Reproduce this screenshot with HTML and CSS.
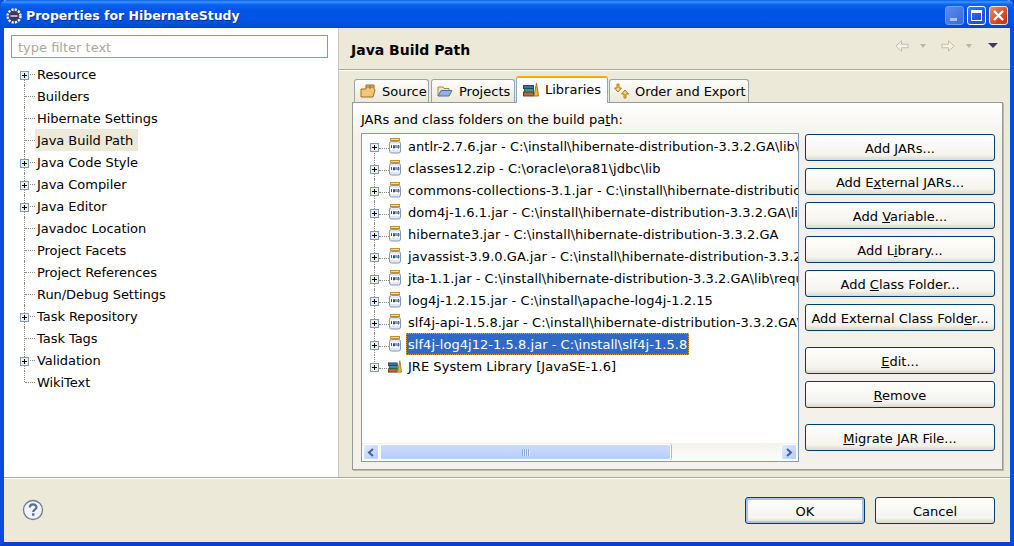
FILE: index.html
```html
<!DOCTYPE html>
<html lang="en">
<head>
  <meta charset="UTF-8">
  <title>Properties for HibernateStudy</title>
  <link rel="stylesheet" href="styles.css">
</head>
<body>

  <svg class="sprites" width="0" height="0">
    <symbol id="jar" viewBox="0 0 14 16">
      <rect x="2.5" y="0.5" width="9" height="2" fill="#f6dc88" stroke="#b8923a"/>
      <rect x="1.5" y="3.5" width="11" height="11.5" rx="2" fill="#dfe8f3" stroke="#8097b5"/>
      <rect x="2" y="6" width="10" height="6" fill="#fff"/>
      <path d="M3.500 7v3M5.500 7.500h1v2.500h-1zM8 7v3M9.900 7.500h1v2.500h-1z" fill="none" stroke="#2f4f86" stroke-width="1"/>
    </symbol>
    <symbol id="books" viewBox="0 0 16 16">
      <rect x="0.5" y="11" width="10" height="4" fill="#c0623a" stroke="#7a3a20"/>
      <rect x="1.5" y="7.500" width="9" height="3.500" fill="#3f9a78" stroke="#22604a"/>
      <rect x="0.5" y="4.500" width="10" height="3" fill="#3f6fb0" stroke="#24456f"/>
      <path d="M11 15l2.500-13 2 13z" fill="#f0b83c" stroke="#a87a18"/>
    </symbol>
    <symbol id="plus" viewBox="0 0 9 9">
      <rect x="0.5" y="0.5" width="8" height="8" fill="#f1eee3" stroke="#7f9db9"/>
      <path d="M2 4.500h5M4.500 2v5" stroke="#000"/>
    </symbol>
  </svg>

  <div class="window">

    <div class="titlebar">
      <svg class="app-icon" width="16" height="16" viewBox="0 0 16 16">
        <circle cx="8" cy="8" r="6.500" fill="#4a3f78" stroke="#f4f1ea" stroke-width="2.400" stroke-dasharray="2.200 1.200"/>
        <circle cx="8" cy="8" r="4" fill="#3a3560"/>
        <path d="M4.500 8h7" stroke="#e8e4f2" stroke-width="1.400"/>
      </svg>
      <span class="title-text">Properties for HibernateStudy</span>
      <div class="win-buttons">
        <div class="win-btn"><span class="min-glyph"></span></div>
        <div class="win-btn"><span class="max-glyph"></span></div>
        <div class="win-btn close">
          <svg width="13" height="13" viewBox="0 0 13 13"><path d="M2 2l9 9M11 2l-9 9" stroke="#fff" stroke-width="2.400"/></svg>
        </div>
      </div>
    </div>

    <div class="main">

      <div class="left-pane">
        <div class="filter">type filter text</div>
        <ul class="nav-tree">
          <li class="has-kids"><svg class="plus"><use href="#plus"/></svg><span>Resource</span></li>
          <li><span>Builders</span></li>
          <li><span>Hibernate Settings</span></li>
          <li class="current"><span>Java Build Path</span></li>
          <li class="has-kids"><svg class="plus"><use href="#plus"/></svg><span>Java Code Style</span></li>
          <li class="has-kids"><svg class="plus"><use href="#plus"/></svg><span>Java Compiler</span></li>
          <li class="has-kids"><svg class="plus"><use href="#plus"/></svg><span>Java Editor</span></li>
          <li><span>Javadoc Location</span></li>
          <li><span>Project Facets</span></li>
          <li><span>Project References</span></li>
          <li><span>Run/Debug Settings</span></li>
          <li class="has-kids"><svg class="plus"><use href="#plus"/></svg><span>Task Repository</span></li>
          <li><span>Task Tags</span></li>
          <li class="has-kids"><svg class="plus"><use href="#plus"/></svg><span>Validation</span></li>
          <li class="last"><span>WikiText</span></li>
        </ul>
      </div>

      <div class="right-pane">
        <div class="page-header">
          <h1>Java Build Path</h1>
          <div class="history">
            <svg width="14" height="14" viewBox="0 0 16 16"><path d="M1 8l6.500-6v4h7.500v4H7.500v4z" fill="#f3f1e8" stroke="#b9b7ad"/></svg>
            <span class="tiny-arrow"></span>
            <svg width="14" height="14" viewBox="0 0 16 16"><path d="M15 8L8.500 2v4H1v4h7.500v4z" fill="#f3f1e8" stroke="#b9b7ad"/></svg>
            <span class="tiny-arrow"></span>
            <span class="menu-arrow"></span>
          </div>
        </div>

        <div class="tabs-area">
          <div class="tabs">
            <div class="tab tab-source">
              <svg width="16" height="16" viewBox="0 0 16 16"><path d="M1 14V6h5V2h8v4l1 1-2 7z" fill="#f3c67c" stroke="#a06a20"/><path d="M6 4h8M10 2v4" fill="none" stroke="#a06a20"/></svg>
              Source
            </div>
            <div class="tab tab-projects">
              <svg width="16" height="16" viewBox="0 0 16 16"><path d="M1 13V4h5l1 1.500h5V8" fill="#fbe7a8" stroke="#a08a40"/><path d="M1 13l3-5.500h11L12 13z" fill="#8fb4e6" stroke="#4a6ea8"/></svg>
              Projects
            </div>
            <div class="tab active">
              <svg width="16" height="16"><use href="#books"/></svg>
              Libraries
            </div>
            <div class="tab tab-order">
              <svg width="17" height="16" viewBox="0 0 17 16"><path d="M5 1v4h2.500L4 9 .5 5H3V1z" fill="#f6d47c" stroke="#a87a18"/><path d="M12 15v-4h2.500L11 7 7.500 11H10v4z" fill="#f6d47c" stroke="#a87a18"/></svg>
              Order and Export
            </div>
          </div>

          <div class="tab-panel">
            <div class="panel-label">JARs and class folders on the build pa<u>t</u>h:</div>
            <div class="panel-body">

              <div class="lib-list">
                <ul class="lib-rows">
                  <li><svg class="plus"><use href="#plus"/></svg><svg class="row-icon"><use href="#jar"/></svg><span>antlr-2.7.6.jar - C:\install\hibernate-distribution-3.3.2.GA\lib\bytecode</span></li>
                  <li><svg class="plus"><use href="#plus"/></svg><svg class="row-icon"><use href="#jar"/></svg><span>classes12.zip - C:\oracle\ora81\jdbc\lib</span></li>
                  <li><svg class="plus"><use href="#plus"/></svg><svg class="row-icon"><use href="#jar"/></svg><span>commons-collections-3.1.jar - C:\install\hibernate-distribution-3.3.2.GA</span></li>
                  <li><svg class="plus"><use href="#plus"/></svg><svg class="row-icon"><use href="#jar"/></svg><span>dom4j-1.6.1.jar - C:\install\hibernate-distribution-3.3.2.GA\lib\required</span></li>
                  <li><svg class="plus"><use href="#plus"/></svg><svg class="row-icon"><use href="#jar"/></svg><span>hibernate3.jar - C:\install\hibernate-distribution-3.3.2.GA</span></li>
                  <li><svg class="plus"><use href="#plus"/></svg><svg class="row-icon"><use href="#jar"/></svg><span>javassist-3.9.0.GA.jar - C:\install\hibernate-distribution-3.3.2.GA\lib</span></li>
                  <li><svg class="plus"><use href="#plus"/></svg><svg class="row-icon"><use href="#jar"/></svg><span>jta-1.1.jar - C:\install\hibernate-distribution-3.3.2.GA\lib\required</span></li>
                  <li><svg class="plus"><use href="#plus"/></svg><svg class="row-icon"><use href="#jar"/></svg><span>log4j-1.2.15.jar - C:\install\apache-log4j-1.2.15</span></li>
                  <li><svg class="plus"><use href="#plus"/></svg><svg class="row-icon"><use href="#jar"/></svg><span>slf4j-api-1.5.8.jar - C:\install\hibernate-distribution-3.3.2.GA\lib\required</span></li>
                  <li class="selected"><svg class="plus"><use href="#plus"/></svg><svg class="row-icon"><use href="#jar"/></svg><span>slf4j-log4j12-1.5.8.jar - C:\install\slf4j-1.5.8</span></li>
                  <li class="last"><svg class="plus"><use href="#plus"/></svg><svg class="row-icon"><use href="#books"/></svg><span>JRE System Library [JavaSE-1.6]</span></li>
                </ul>
                <div class="hscroll">
                  <div class="scroll-btn"><svg width="8" height="9" viewBox="0 0 8 9"><path d="M6 1L2 4.500 6 8" fill="none" stroke="#3f5f9f" stroke-width="2"/></svg></div>
                  <div class="scroll-track">
                    <div class="scroll-thumb"><span class="grip"></span></div>
                  </div>
                  <div class="scroll-btn"><svg width="8" height="9" viewBox="0 0 8 9"><path d="M2 1l4 3.500L2 8" fill="none" stroke="#3f5f9f" stroke-width="2"/></svg></div>
                </div>
              </div>

              <div class="side-buttons">
                <div class="btn-group">
                  <button class="btn">Add <u>J</u>ARs...</button>
                  <button class="btn">Add E<u>x</u>ternal JARs...</button>
                  <button class="btn">Add <u>V</u>ariable...</button>
                  <button class="btn">Add L<u>i</u>brary...</button>
                  <button class="btn">Add <u>C</u>lass Folder...</button>
                  <button class="btn">Add External Class Fold<u>e</u>r...</button>
                </div>
                <div class="btn-group">
                  <button class="btn"><u>E</u>dit...</button>
                  <button class="btn"><u>R</u>emove</button>
                </div>
                <div class="btn-group">
                  <button class="btn"><u>M</u>igrate JAR File...</button>
                </div>
              </div>

            </div>
          </div>
        </div>
      </div>

    </div>

    <div class="footer">
      <svg class="help" width="22" height="22" viewBox="0 0 22 22">
        <circle cx="11" cy="11" r="9.500" fill="#f2f3f6" stroke="#6a7c9c" stroke-width="1.300"/>
        <path d="M7.800 8.500c0-4.200 6.600-4.200 6.600-.3 0 2.500-3.200 2.300-3.200 4.800" fill="none" stroke="#5a6c90" stroke-width="2.200"/>
        <rect x="10" y="14.300" width="2.400" height="2.400" fill="#5a6c90"/>
      </svg>
      <div class="footer-buttons">
        <button class="btn default">OK</button>
        <button class="btn">Cancel</button>
      </div>
    </div>

  </div>

</body>
</html>
```

FILE: styles.css
```css
* {
  box-sizing: border-box;
}

body {
  margin: 0;
  font-family: "DejaVu Sans", sans-serif;
  font-size: 13px;
  color: #000;
  background: #fff;
}

ul {
  list-style: none;
  margin: 0;
  padding: 0;
}

.sprites {
  position: absolute;
}

.window {
  width: 1014px;
  height: 546px;
  display: flex;
  flex-direction: column;
  background: #ece9d8;
  border-left: 4px solid #0a4be0;
  border-right: 4px solid #0a4be0;
  border-bottom: 4px solid #0a3fd0;
}

/* title bar */
.titlebar {
  height: 28px;
  flex: none;
  margin: 0 -4px;
  padding: 3px 6px 0 6px;
  display: flex;
  align-items: center;
  gap: 4px;
  border-radius: 7px 7px 0 0;
  background: linear-gradient(#0a5ce6 0, #3d95ff 2px, #0f66ee 4px, #0055e5 10px, #0054e3 22px, #0048cc 28px);
}

.app-icon {
  flex: none;
}

.title-text {
  color: #fff;
  font-weight: bold;
  font-size: 12.5px;
  text-shadow: 1px 1px 0 #0a2f96;
}

.win-buttons {
  margin-left: auto;
  display: flex;
  gap: 3px;
}

.win-btn {
  width: 19px;
  height: 19px;
  border: 1px solid #fff;
  border-radius: 3px;
  background: linear-gradient(135deg, #3c7cf0, #1f50d8 70%, #2a5ae0);
  display: flex;
  align-items: center;
  justify-content: center;
  position: relative;
}

.win-btn:first-child {
  border-color: #6f9df0;
  background: linear-gradient(135deg, #5a8cf0, #3a68e0);
}

.win-btn.close {
  background: linear-gradient(135deg, #e88a68, #d8401c 70%, #c83810);
  border-color: #f2e6e0;
}

.min-glyph {
  width: 7px;
  height: 3px;
  background: #a9c0f0;
  position: absolute;
  left: 4px;
  bottom: 3px;
}

.max-glyph {
  width: 11px;
  height: 11px;
  border: 1px solid #fff;
  border-top-width: 3px;
}

/* left side */
.main {
  height: 449px;
  flex: none;
  display: flex;
}

.left-pane {
  width: 334px;
  flex: none;
  background: #fff;
  padding: 7px 0 0 7px;
}

.filter {
  width: 317px;
  height: 23px;
  border: 1px solid #7f9db9;
  padding: 0 6px;
  line-height: 23px;
  color: #aca899;
}

.nav-tree {
  margin-top: 5px;
  letter-spacing: -0.05px;
}

.nav-tree li {
  height: 22px;
  line-height: 24px;
  padding-left: 25px;
  position: relative;
}

.nav-tree li span {
  display: inline-block;
  height: 22px;
  padding: 0 1px;
}

.nav-tree li::before {
  content: "";
  position: absolute;
  left: 13px;
  top: 0;
  height: 100%;
  border-left: 1px dotted #8c8a7e;
}

.nav-tree li::after {
  content: "";
  position: absolute;
  left: 14px;
  width: 10px;
  top: 11px;
  border-top: 1px dotted #8c8a7e;
}

.nav-tree li:first-child::before {
  top: 11px;
  height: 11px;
}

.nav-tree li.last::before {
  height: 11px;
}

.nav-tree li.current span {
  background: #ece9d8;
  padding: 0 5px 0 2px;
  margin-left: -1px;
}

.nav-tree .plus {
  position: absolute;
  left: 9px;
  top: 8px;
  width: 9px;
  height: 9px;
  z-index: 1;
}

/* right side */
.right-pane {
  flex: 1;
  min-width: 0;
  border-left: 1px solid #c9c6b6;
  display: flex;
  flex-direction: column;
}

.page-header {
  height: 42px;
  flex: none;
  padding: 0 12px 0 12px;
  display: flex;
  align-items: center;
  justify-content: space-between;
  border-bottom: 1px solid #aca899;
  box-shadow: 0 1px 0 #fff;
}

.page-header h1 {
  margin: 3px 0 0 0;
  font-size: 14px;
  font-weight: bold;
}

.history {
  margin-bottom: 6px;
  display: flex;
  align-items: center;
  gap: 11px;
}

.tiny-arrow {
  width: 0;
  height: 0;
  margin-right: 4px;
  border: 3px solid transparent;
  border-top: 4px solid #b9b7ad;
  border-bottom: 0;
}

.menu-arrow {
  width: 0;
  height: 0;
  margin-left: 1px;
  border: 5px solid transparent;
  border-top: 5px solid #3c3a68;
  border-bottom: 0;
}

.tabs-area {
  flex: 1;
  padding: 6px 7px 7px 13px;
  display: flex;
  flex-direction: column;
}

.tabs {
  height: 26px;
  flex: none;
  display: flex;
  align-items: flex-end;
  gap: 2px;
  padding-left: 2px;
  position: relative;
  z-index: 1;
}

.tab {
  height: 23px;
  padding: 0 3px 0 5px;
  display: flex;
  align-items: center;
  gap: 6px;
  background: linear-gradient(#fdfdfb, #ece9d8);
  border: 1px solid #91a7b4;
  border-bottom: 0;
  border-radius: 3px 3px 0 0;
  white-space: nowrap;
}

.tab svg {
  flex: none;
}

.tab-source {
  width: 75px;
}

.tab-projects {
  width: 84px;
}

.tab-order {
  width: 140px;
  padding: 0 0 0 4px;
  gap: 4px;
  letter-spacing: -0.1px;
}

.tab.active {
  height: 27px;
  width: 92px;
  margin: 0 -1px -1px -1px;
  padding: 0 0 3px 6px;
  background: #fff;
  border-top: 2px solid #ffa800;
  border-color: #ffa800 #91a7b4 #fff;
}

.tab-panel {
  flex: 1;
  background: linear-gradient(#fff, #f3f1ea 36px);
  border: 1px solid #919b9c;
  box-shadow: 1px 1px 0 #bdbaad;
  padding: 0 7px 0 8px;
}

.panel-label {
  height: 30px;
  line-height: 33px;
}

.panel-body {
  display: flex;
  gap: 6px;
}

.lib-list {
  width: 438px;
  height: 329px;
  flex: none;
  background: #fff;
  border: 1px solid #7f9db9;
  display: flex;
  flex-direction: column;
  overflow: hidden;
}

.lib-rows {
  flex: 1;
  padding-top: 1px;
  letter-spacing: 0.04px;
}

.lib-rows li {
  height: 22px;
  display: flex;
  align-items: center;
  position: relative;
  padding-left: 8px;
  white-space: nowrap;
  overflow: hidden;
}

.lib-rows li::before {
  content: "";
  position: absolute;
  left: 12px;
  top: 0;
  height: 100%;
  border-left: 1px dotted #8c8a7e;
}

.lib-rows li:first-child::before {
  top: 11px;
}

.lib-rows li.last::before {
  height: 11px;
}

.lib-rows .plus {
  flex: none;
  width: 9px;
  height: 9px;
  margin-top: 3px;
  position: relative;
  z-index: 1;
}

.row-icon {
  flex: none;
  width: 14px;
  height: 16px;
  margin: 0 6px 0 9px;
  position: relative;
}

.lib-rows li::after {
  content: "";
  position: absolute;
  left: 17px;
  width: 10px;
  top: 13px;
  border-top: 1px dotted #8c8a7e;
}

.lib-rows li span {
  height: 22px;
  line-height: 24px;
  padding: 0 2px;
  margin-left: -2px;
}

.lib-rows li.selected span {
  background: #316ac5;
  color: #fff;
  border: 1px dotted #e8a030;
  padding: 0 1px;
  line-height: 22px;
}

.hscroll {
  height: 17px;
  flex: none;
  margin-bottom: 1px;
  display: flex;
  align-items: flex-end;
  background: linear-gradient(#f3f1ec, #fefefb);
  padding: 0 1px;
}

.scroll-btn {
  width: 16px;
  height: 16px;
  border: 1px solid #fff;
  border-radius: 2px;
  background: linear-gradient(135deg, #e2ebfe, #b7cbf8);
  display: flex;
  align-items: center;
  justify-content: center;
}

.scroll-track {
  flex: 1;
  padding-left: 1px;
}

.scroll-thumb {
  width: 291px;
  height: 16px;
  border: 1px solid #fff;
  border-radius: 2px;
  background: linear-gradient(#cddcfc, #b8cdfa);
  box-shadow: 1px 0 0 #a8b8dc;
  display: flex;
  align-items: center;
  justify-content: center;
}

.grip {
  width: 8px;
  height: 7px;
  background: repeating-linear-gradient(90deg, #8aa4dc 0 1px, #e6eefe 1px 2px);
}

.side-buttons {
  width: 190px;
  flex: none;
  display: flex;
  flex-direction: column;
  gap: 16px;
  padding-top: 1px;
}

.btn-group {
  display: flex;
  flex-direction: column;
  gap: 7px;
}

.btn {
  display: block;
  width: 190px;
  height: 27px;
  padding: 2px 0 0 0;
  font-family: inherit;
  font-size: 13px;
  color: #000;
  border: 1px solid #003c74;
  border-radius: 3px;
  background: linear-gradient(#fefefd, #f4f3ee 80%, #dcd8cc);
}

.btn.default {
  box-shadow: inset 0 0 0 2px #a9c4ea;
}

/* bottom strip */
.footer {
  flex: 1;
  padding: 0 15px 0 18px;
  display: flex;
  align-items: center;
  justify-content: space-between;
  border-top: 1px solid #aca899;
  box-shadow: inset 0 1px 0 #fff;
}

.footer-buttons {
  display: flex;
  gap: 10px;
}

.footer-buttons .btn {
  width: 120px;
}
```
